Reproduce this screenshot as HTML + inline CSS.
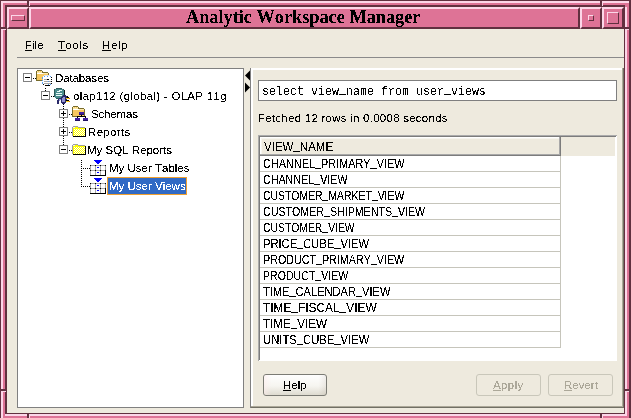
<!DOCTYPE html>
<html><head><meta charset="utf-8">
<style>
html,body{margin:0;padding:0}
body{width:631px;height:418px;overflow:hidden;position:relative;background:#eeeade;font-family:"Liberation Sans",sans-serif}
.a{position:absolute;box-sizing:border-box}
.D{background:#61303f}
.L{background:#fcd6e8}
.M{background:#de7396}
.bev{position:absolute;box-sizing:border-box;background:#de7396;border-style:solid;border-color:#fcd6e8 #61303f #61303f #fcd6e8}
.t{filter:url(#crisp);font-kerning:none;position:absolute;white-space:nowrap;line-height:16px;font-size:11.5px;color:#000;transform-origin:0 0}
.tr{font-size:11.5px}
.us{position:relative;top:-2px}
.tc{left:263px;font-size:12px;transform:scaleX(0.893)}
svg{position:absolute;left:0;top:0}
</style></head><body>
<svg width="0" height="0" style="position:absolute"><filter id="crisp" x="-5%" y="-20%" width="110%" height="140%"><feComponentTransfer><feFuncA type="discrete" tableValues="0 0 0 0 0 0 0 0 0 1 1 1 1 1 1 1 1 1 1 1"/></feComponentTransfer></filter></svg>
<!-- frame -->
<div class="a D" style="left:0;top:0;width:631px;height:418px"></div>
<div class="a L" style="left:1px;top:1px;width:628px;height:417px"></div>
<div class="a M" style="left:3px;top:3px;width:624px;height:415px"></div>
<div class="a D" style="left:5px;top:5px;width:620px;height:409px"></div>
<div class="a L" style="left:624px;top:7px;width:3px;height:409px"></div>
<div class="a L" style="left:5px;top:413px;width:622px;height:3px"></div>
<div class="a D" style="left:629px;top:0;width:2px;height:418px"></div>
<div class="a M" style="left:627px;top:3px;width:2px;height:415px"></div>
<div class="a M" style="left:3px;top:416px;width:624px;height:2px"></div>
<div class="a D" style="left:624px;top:5px;width:1px;height:409px"></div>
<div class="a D" style="left:5px;top:413px;width:620px;height:1px"></div>
<!-- corner breaks -->
<div class="a D" style="left:27px;top:1px;width:2px;height:4px"></div><div class="a L" style="left:29px;top:1px;width:1px;height:5px"></div>
<div class="a D" style="left:600px;top:1px;width:2px;height:4px"></div><div class="a L" style="left:602px;top:1px;width:1px;height:5px"></div>
<div class="a D" style="left:27px;top:414px;width:2px;height:4px"></div><div class="a L" style="left:29px;top:414px;width:1px;height:4px"></div>
<div class="a D" style="left:600px;top:414px;width:2px;height:4px"></div><div class="a L" style="left:602px;top:414px;width:1px;height:4px"></div>
<div class="a D" style="left:1px;top:27px;width:4px;height:2px"></div><div class="a L" style="left:1px;top:29px;width:5px;height:1px"></div>
<div class="a D" style="left:1px;top:389px;width:4px;height:2px"></div><div class="a L" style="left:1px;top:391px;width:5px;height:1px"></div>
<div class="a D" style="left:625px;top:27px;width:4px;height:2px"></div><div class="a L" style="left:625px;top:29px;width:4px;height:1px"></div>
<div class="a D" style="left:625px;top:389px;width:4px;height:2px"></div><div class="a L" style="left:625px;top:391px;width:4px;height:1px"></div>
<!-- client -->
<div class="a" style="left:7px;top:7px;width:617px;height:406px;background:#eeeade"></div>
<!-- title bar -->
<div class="bev" style="left:7px;top:7px;width:22px;height:22px;border-width:2px"></div>
<div class="bev" style="left:11px;top:15px;width:14px;height:6px;border-width:1px"></div>
<div class="bev" style="left:29px;top:7px;width:551px;height:22px;border-width:2px"></div>
<div class="bev" style="left:580px;top:7px;width:22px;height:22px;border-width:2px"></div>
<div class="bev" style="left:588px;top:15px;width:6px;height:6px;border-width:1px"></div>
<div class="bev" style="left:602px;top:7px;width:22px;height:22px;border-width:2px"></div>
<div class="bev" style="left:607px;top:12px;width:12px;height:12px;border-width:1px"></div>
<div class="t" style="left:186px;top:6px;font-family:'Liberation Serif',serif;font-weight:bold;font-size:18.6px;line-height:22px;color:#000;transform:scaleX(0.9826)">Analytic Workspace Manager</div>

<!-- menubar -->
<div class="t" style="left:25px;top:37px"><u>F</u>ile</div>
<div class="t" style="left:58px;top:37px;letter-spacing:0.5px"><u>T</u>ools</div>
<div class="t" style="left:102px;top:37px;letter-spacing:0.6px"><u>H</u>elp</div>
<div class="a" style="left:17px;top:57px;width:607px;height:1px;background:#8a8a8a"></div>

<!-- left panel -->
<div class="a" style="left:17px;top:68px;width:227px;height:340px;background:#fff;border:1px solid #808080"></div>
<div class="a" style="left:107px;top:177px;width:80px;height:18px;background:#316ac5;border:1px solid #f0a030"></div>
<svg width="631" height="418" shape-rendering="crispEdges"><path fill="#808080" d="M23 73h9v1h-9zM23 81h9v1h-9zM23 74h1v7h-1zM31 74h1v7h-1z"/><path fill="#000" d="M25 77h5v1h-5z"/><path fill="#808080" d="M41 91h9v1h-9zM41 99h9v1h-9zM41 92h1v7h-1zM49 92h1v7h-1z"/><path fill="#000" d="M43 95h5v1h-5z"/><path fill="#808080" d="M59 109h9v1h-9zM59 117h9v1h-9zM59 110h1v7h-1zM67 110h1v7h-1z"/><path fill="#000" d="M61 113h5v1h-5zM63 111h1v5h-1z"/><path fill="#808080" d="M59 127h9v1h-9zM59 135h9v1h-9zM59 128h1v7h-1zM67 128h1v7h-1z"/><path fill="#000" d="M61 131h5v1h-5zM63 129h1v5h-1z"/><path fill="#808080" d="M59 145h9v1h-9zM59 153h9v1h-9zM59 146h1v7h-1zM67 146h1v7h-1z"/><path fill="#000" d="M61 149h5v1h-5zM33 78h1v1h-1zM35 78h1v1h-1zM51 96h1v1h-1zM53 96h1v1h-1zM69 114h1v1h-1zM71 114h1v1h-1zM69 132h1v1h-1zM71 132h1v1h-1zM69 150h1v1h-1zM71 150h1v1h-1zM45 88h1v1h-1zM45 90h1v1h-1zM63 102h1v1h-1zM63 104h1v1h-1zM63 106h1v1h-1zM63 108h1v1h-1zM63 118h1v1h-1zM63 120h1v1h-1zM63 122h1v1h-1zM63 124h1v1h-1zM63 126h1v1h-1zM63 136h1v1h-1zM63 138h1v1h-1zM63 140h1v1h-1zM63 142h1v1h-1zM63 144h1v1h-1zM81 160h1v1h-1zM81 162h1v1h-1zM81 164h1v1h-1zM81 166h1v1h-1zM81 168h1v1h-1zM81 170h1v1h-1zM81 172h1v1h-1zM81 174h1v1h-1zM81 176h1v1h-1zM81 178h1v1h-1zM81 180h1v1h-1zM81 182h1v1h-1zM81 184h1v1h-1zM81 186h1v1h-1zM83 168h1v1h-1zM85 168h1v1h-1zM87 168h1v1h-1zM89 168h1v1h-1zM83 186h1v1h-1zM85 186h1v1h-1zM87 186h1v1h-1zM89 186h1v1h-1z"/><path fill="#786c2c" d="M37 70h5v1h-5zM36 71h1v10h-1zM42 71h1v1h-1zM42 72h6v1h-6zM48 73h1v8h-1zM36 80h13v1h-13z"/><path fill="#fde9a8" d="M37 71h5v2h-5zM43 73h5v1h-5z"/><path fill="#fff" d="M37 73h6v1h-6z"/><path fill="#f8c860" d="M37 74h11v6h-11zM38 71h1v1h-1zM40 71h1v1h-1z"/><path fill="#dde6f0" d="M44 75h6v1h-6z"/><path fill="#ffffff" d="M43 76h8v9h-8z"/><path fill="#5aa0f0" d="M44 76h1v1h-1zM47 76h1v1h-1zM50 76h1v1h-1zM42 77h1v1h-1zM42 78h1v1h-1zM42 80h1v1h-1zM42 82h1v1h-1zM42 83h1v1h-1z"/><path fill="#000" d="M51 77h1v1h-1zM51 79h1v1h-1zM51 81h1v1h-1zM51 83h1v1h-1z"/><path fill="#a8a8a8" d="M44 79h3v1h-3z"/><path fill="#000" d="M47 79h2v1h-2z"/><path fill="#a8a8a8" d="M44 81h7v1h-7z"/><path fill="#5aa0f0" d="M48 81h1v1h-1z"/><path fill="#a8a8a8" d="M44 83h7v1h-7z"/><path fill="#000" d="M43 84h1v1h-1z"/><path fill="#5aa0f0" d="M48 84h1v1h-1zM50 84h1v1h-1z"/><path fill="#000" d="M45 85h5v1h-5z"/><path fill="#2c5c5c" d="M56 88h6v1h-6z"/><path fill="#4a8c8c" d="M55 89h8v1h-8z"/><path fill="#2c5c5c" d="M54 89h1v1h-1zM63 89h1v1h-1zM54 90h1v7h-1z"/><path fill="#102020" d="M64 90h1v7h-1z"/><path fill="#4a8c8c" d="M55 90h9v7h-9z"/><path fill="#e8f8f8" d="M59 90h3v1h-3zM57 91h3v1h-3zM56 93h6v1h-6zM56 95h6v1h-6z"/><path fill="#4a8c8c" d="M55 97h9v1h-9z"/><path fill="#2c5c5c" d="M56 98h7v1h-7z"/><path fill="#282868" d="M63 95h3v1h-3zM62 96h5v1h-5z"/><path fill="#000" d="M67 96h1v1h-1z"/><path fill="#282868" d="M61 97h2v1h-2z"/><path fill="#9090d0" d="M63 97h2v1h-2z"/><path fill="#282868" d="M65 97h2v1h-2z"/><path fill="#000" d="M67 97h2v1h-2z"/><path fill="#282868" d="M59 98h3v1h-3z"/><path fill="#9090d0" d="M62 98h3v1h-3z"/><path fill="#282868" d="M65 98h1v1h-1z"/><path fill="#f8d020" d="M66 98h3v1h-3z"/><path fill="#e07818" d="M69 98h1v1h-1z"/><path fill="#282868" d="M58 99h1v1h-1z"/><path fill="#9090d0" d="M59 99h2v1h-2z"/><path fill="#282868" d="M61 99h1v1h-1z"/><path fill="#9090d0" d="M62 99h3v1h-3z"/><path fill="#282868" d="M65 99h2v1h-2zM57 100h2v1h-2z"/><path fill="#9090d0" d="M59 100h1v1h-1z"/><path fill="#282868" d="M61 100h1v1h-1z"/><path fill="#9090d0" d="M62 100h3v1h-3z"/><path fill="#282868" d="M65 100h1v1h-1z"/><path fill="#000" d="M66 100h3v1h-3z"/><path fill="#282868" d="M57 101h2v1h-2z"/><path fill="#9090d0" d="M62 101h3v1h-3z"/><path fill="#282868" d="M61 101h1v1h-1zM65 101h1v1h-1z"/><path fill="#f8d020" d="M66 101h3v1h-3z"/><path fill="#e07818" d="M69 101h1v1h-1z"/><path fill="#282868" d="M57 102h2v1h-2zM61 102h5v1h-5zM57 103h2v1h-2zM62 103h3v1h-3z"/><path fill="#786c2c" d="M73 106h5v1h-5zM72 107h1v10h-1zM78 107h1v1h-1zM78 108h6v1h-6zM84 109h1v8h-1zM72 116h13v1h-13z"/><path fill="#fde9a8" d="M73 107h5v2h-5zM79 109h5v1h-5z"/><path fill="#fff" d="M73 109h6v1h-6z"/><path fill="#f8c860" d="M73 110h11v6h-11zM74 107h1v1h-1zM76 107h1v1h-1z"/><path fill="#4020a0" d="M79 112h5v3h-5z"/><path fill="#201060" d="M79 114h5v1h-5z"/><path fill="#000" d="M81 115h1v2h-1zM77 116h9v1h-9zM77 117h1v1h-1zM85 117h1v1h-1z"/><path fill="#4020a0" d="M75 118h5v3h-5z"/><path fill="#201060" d="M75 120h5v1h-5z"/><path fill="#4020a0" d="M83 118h5v3h-5z"/><path fill="#201060" d="M83 120h5v1h-5z"/><path fill="#a0a0a0" d="M73 126h5v1h-5zM72 127h1v9h-1zM78 127h7v1h-7z"/><path fill="#f0f0f0" d="M73 127h2v1h-2z"/><path fill="#ffff00" d="M75 127h3v1h-3zM73 128h12v8h-12z"/><path fill="#ffffff" d="M74 129h1v1h-1zM76 129h1v1h-1zM78 129h1v1h-1zM80 129h1v1h-1zM82 129h1v1h-1zM84 129h1v1h-1zM75 130h1v1h-1zM77 130h1v1h-1zM79 130h1v1h-1zM81 130h1v1h-1zM83 130h1v1h-1zM74 131h1v1h-1zM76 131h1v1h-1zM78 131h1v1h-1zM80 131h1v1h-1zM82 131h1v1h-1zM84 131h1v1h-1zM75 132h1v1h-1zM77 132h1v1h-1zM79 132h1v1h-1zM81 132h1v1h-1zM83 132h1v1h-1zM74 133h1v1h-1zM76 133h1v1h-1zM78 133h1v1h-1zM80 133h1v1h-1zM82 133h1v1h-1zM84 133h1v1h-1zM75 134h1v1h-1zM77 134h1v1h-1zM79 134h1v1h-1zM81 134h1v1h-1zM83 134h1v1h-1zM74 135h1v1h-1zM76 135h1v1h-1zM78 135h1v1h-1zM80 135h1v1h-1zM82 135h1v1h-1zM84 135h1v1h-1z"/><path fill="#000" d="M85 128h1v9h-1zM73 136h13v1h-13z"/><path fill="#a0a0a0" d="M73 144h5v1h-5zM72 145h1v9h-1zM78 145h7v1h-7z"/><path fill="#f0f0f0" d="M73 145h2v1h-2z"/><path fill="#ffff00" d="M75 145h3v1h-3zM73 146h12v8h-12z"/><path fill="#ffffff" d="M74 147h1v1h-1zM76 147h1v1h-1zM78 147h1v1h-1zM80 147h1v1h-1zM82 147h1v1h-1zM84 147h1v1h-1zM75 148h1v1h-1zM77 148h1v1h-1zM79 148h1v1h-1zM81 148h1v1h-1zM83 148h1v1h-1zM74 149h1v1h-1zM76 149h1v1h-1zM78 149h1v1h-1zM80 149h1v1h-1zM82 149h1v1h-1zM84 149h1v1h-1zM75 150h1v1h-1zM77 150h1v1h-1zM79 150h1v1h-1zM81 150h1v1h-1zM83 150h1v1h-1zM74 151h1v1h-1zM76 151h1v1h-1zM78 151h1v1h-1zM80 151h1v1h-1zM82 151h1v1h-1zM84 151h1v1h-1zM75 152h1v1h-1zM77 152h1v1h-1zM79 152h1v1h-1zM81 152h1v1h-1zM83 152h1v1h-1zM74 153h1v1h-1zM76 153h1v1h-1zM78 153h1v1h-1zM80 153h1v1h-1zM82 153h1v1h-1zM84 153h1v1h-1z"/><path fill="#000" d="M85 146h1v9h-1zM73 154h13v1h-13z"/><path fill="#0000ff" d="M94 160h8v1h-8zM95 161h6v1h-6zM96 162h4v1h-4zM97 163h2v1h-2z"/><path fill="#fff" d="M91 166h14v9h-14z"/><path fill="#a8a8a8" d="M90 165h16v1h-16zM90 170h16v1h-16zM90 165h1v11h-1zM95 165h1v11h-1zM100 165h1v11h-1zM105 165h1v11h-1z"/><path fill="#000" d="M90 165h1v1h-1zM95 165h1v1h-1zM100 165h1v1h-1zM105 165h1v1h-1zM90 170h1v1h-1zM95 170h1v1h-1zM100 170h1v1h-1zM105 170h1v1h-1zM90 175h16v1h-16zM105 170h1v6h-1z"/><path fill="#0000ff" d="M97 167h2v1h-2zM97 172h2v1h-2zM94 178h8v1h-8zM95 179h6v1h-6zM96 180h4v1h-4zM97 181h2v1h-2z"/><path fill="#fff" d="M91 184h14v9h-14z"/><path fill="#a8a8a8" d="M90 183h16v1h-16zM90 188h16v1h-16zM90 183h1v11h-1zM95 183h1v11h-1zM100 183h1v11h-1zM105 183h1v11h-1z"/><path fill="#000" d="M90 183h1v1h-1zM95 183h1v1h-1zM100 183h1v1h-1zM105 183h1v1h-1zM90 188h1v1h-1zM95 188h1v1h-1zM100 188h1v1h-1zM105 188h1v1h-1zM90 193h16v1h-16zM105 188h1v6h-1z"/><path fill="#0000ff" d="M97 185h2v1h-2zM97 190h2v1h-2z"/></svg>
<div class="t tr" style="left:55px;top:70px;letter-spacing:-0.12px">Databases</div>
<div class="t tr" style="left:73px;top:88px;letter-spacing:0.30px">olap112 (global) - OLAP 11g</div>
<div class="t tr" style="left:91px;top:106px;letter-spacing:-0.15px">Schemas</div>
<div class="t tr" style="left:88px;top:124px;letter-spacing:0.33px">Reports</div>
<div class="t tr" style="left:87px;top:142px;letter-spacing:0px">My SQL Reports</div>
<div class="t tr" style="left:109px;top:160px;letter-spacing:0px">My User Tables</div>
<div class="t tr" style="left:109px;top:178px;color:#fff">My User Views</div>

<!-- splitter arrows -->
<svg style="left:244px;top:70px" width="7" height="24" viewBox="0 0 7 24">
<path d="M1 5.5 L6 0.5 L6 10.5 Z" fill="#000"/>
<path d="M1 12.5 L6 17.5 L1 22.5 Z" fill="#000"/>
</svg>

<!-- right panel -->
<div class="a" style="left:250px;top:68px;width:374px;height:340px;background:#716f64"></div>
<div class="a" style="left:250px;top:68px;width:373px;height:339px;background:#aca899"></div>
<div class="a" style="left:251px;top:68px;width:371px;height:338px;background:#fff"></div>
<div class="a" style="left:253px;top:70px;width:369px;height:336px;background:#eeeade"></div>
<div class="a" style="left:250px;top:68px;width:1px;height:340px;background:#808080"></div>

<!-- query field -->
<div class="a" style="left:258px;top:80px;width:359px;height:21px;background:#fff;border:1px solid #7f7f7f"></div>
<div class="t" style="left:262px;top:82px;font-family:'Liberation Mono',monospace;font-size:11.67px;transform:scaleY(1.17)">select view<span class="us">_</span>name from user<span class="us">_</span>views</div>
<div class="t" style="left:258px;top:110px;letter-spacing:0.25px">Fetched 12 rows in 0.0008 seconds</div>

<!-- table -->
<div class="a" style="left:258px;top:135px;width:359px;height:226px;background:#fff;border-style:solid;border-width:1px 0 0 1px;border-color:#ababab"></div>
<div class="a" style="left:259px;top:136px;width:357px;height:224px;border-style:solid;border-width:1px 0 0 1px;border-color:#7c7c7c"></div>
<div class="a" style="left:260px;top:137px;width:355px;height:19px;background:#eeeade"></div>
<div class="a" style="left:260px;top:137px;width:301px;height:19px;background:#7c7c7c"></div>
<div class="a" style="left:260px;top:137px;width:300px;height:18px;background:#a8a8a8"></div>
<div class="a" style="left:260px;top:137px;width:299px;height:17px;background:#fff"></div>
<div class="a" style="left:261px;top:138px;width:298px;height:16px;background:#f6f5ee"></div>
<div class="a" style="left:262px;top:139px;width:297px;height:15px;background:#eeeade"></div>
<svg width="631" height="418" shape-rendering="crispEdges"><path fill="#c6c5bb" d="M260 171h300v1h-300zM260 187h300v1h-300zM260 203h300v1h-300zM260 219h300v1h-300zM260 235h300v1h-300zM260 251h300v1h-300zM260 267h300v1h-300zM260 283h300v1h-300zM260 299h300v1h-300zM260 315h300v1h-300zM260 331h300v1h-300zM260 347h300v1h-300zM560 156h1v192h-1z"/></svg>
<div class="t tc" style="left:264px;top:139px;transform:scaleX(0.96)">VIEW<span class="us">_</span>NAME</div>
<div class="t tc" style="top:156px;transform:scaleX(0.9060)">CHANNEL<span class=us>_</span>PRIMARY<span class=us>_</span>VIEW</div><div class="t tc" style="top:172px;transform:scaleX(0.8930)">CHANNEL<span class=us>_</span>VIEW</div><div class="t tc" style="top:188px;transform:scaleX(0.8680)">CUSTOMER<span class=us>_</span>MARKET<span class=us>_</span>VIEW</div><div class="t tc" style="top:204px;transform:scaleX(0.8875)">CUSTOMER<span class=us>_</span>SHIPMENTS<span class=us>_</span>VIEW</div><div class="t tc" style="top:220px;transform:scaleX(0.8644)">CUSTOMER<span class=us>_</span>VIEW</div><div class="t tc" style="top:236px;transform:scaleX(0.9287)">PRICE<span class=us>_</span>CUBE<span class=us>_</span>VIEW</div><div class="t tc" style="top:252px;transform:scaleX(0.8930)">PRODUCT<span class=us>_</span>PRIMARY<span class=us>_</span>VIEW</div><div class="t tc" style="top:268px;transform:scaleX(0.8824)">PRODUCT<span class=us>_</span>VIEW</div><div class="t tc" style="top:284px;transform:scaleX(0.9223)">TIME<span class=us>_</span>CALENDAR<span class=us>_</span>VIEW</div><div class="t tc" style="top:300px;transform:scaleX(0.9903)">TIME<span class=us>_</span>FISCAL<span class=us>_</span>VIEW</div><div class="t tc" style="top:316px;transform:scaleX(0.9700)">TIME<span class=us>_</span>VIEW</div><div class="t tc" style="top:332px;transform:scaleX(0.9381)">UNITS<span class=us>_</span>CUBE<span class=us>_</span>VIEW</div>

<!-- buttons -->
<div class="a" style="left:263px;top:374px;width:64px;height:22px;border:1px solid #7b7b74;border-radius:3px;background:linear-gradient(#fefefe 0%,#f6f5f0 55%,#dedbd0 100%)"></div>
<div class="a" style="left:264px;top:375px;width:62px;height:20px;border-radius:2px;background:linear-gradient(90deg,rgba(255,235,235,0.5) 0,rgba(255,255,255,0) 12%,rgba(255,255,255,0) 88%,rgba(120,100,80,0.10) 100%)"></div>
<div class="t" style="left:283px;top:377px"><u>H</u>elp</div>
<div class="a" style="left:476px;top:374px;width:65px;height:22px;border:1px solid #c9c7ba;border-radius:3px"></div>
<div class="t" style="left:493px;top:377px;color:#aca899;letter-spacing:0.4px"><u>A</u>pply</div>
<div class="a" style="left:548px;top:374px;width:65px;height:22px;border:1px solid #c9c7ba;border-radius:3px"></div>
<div class="t" style="left:564px;top:377px;color:#aca899"><u>R</u>evert</div>
</body></html>
